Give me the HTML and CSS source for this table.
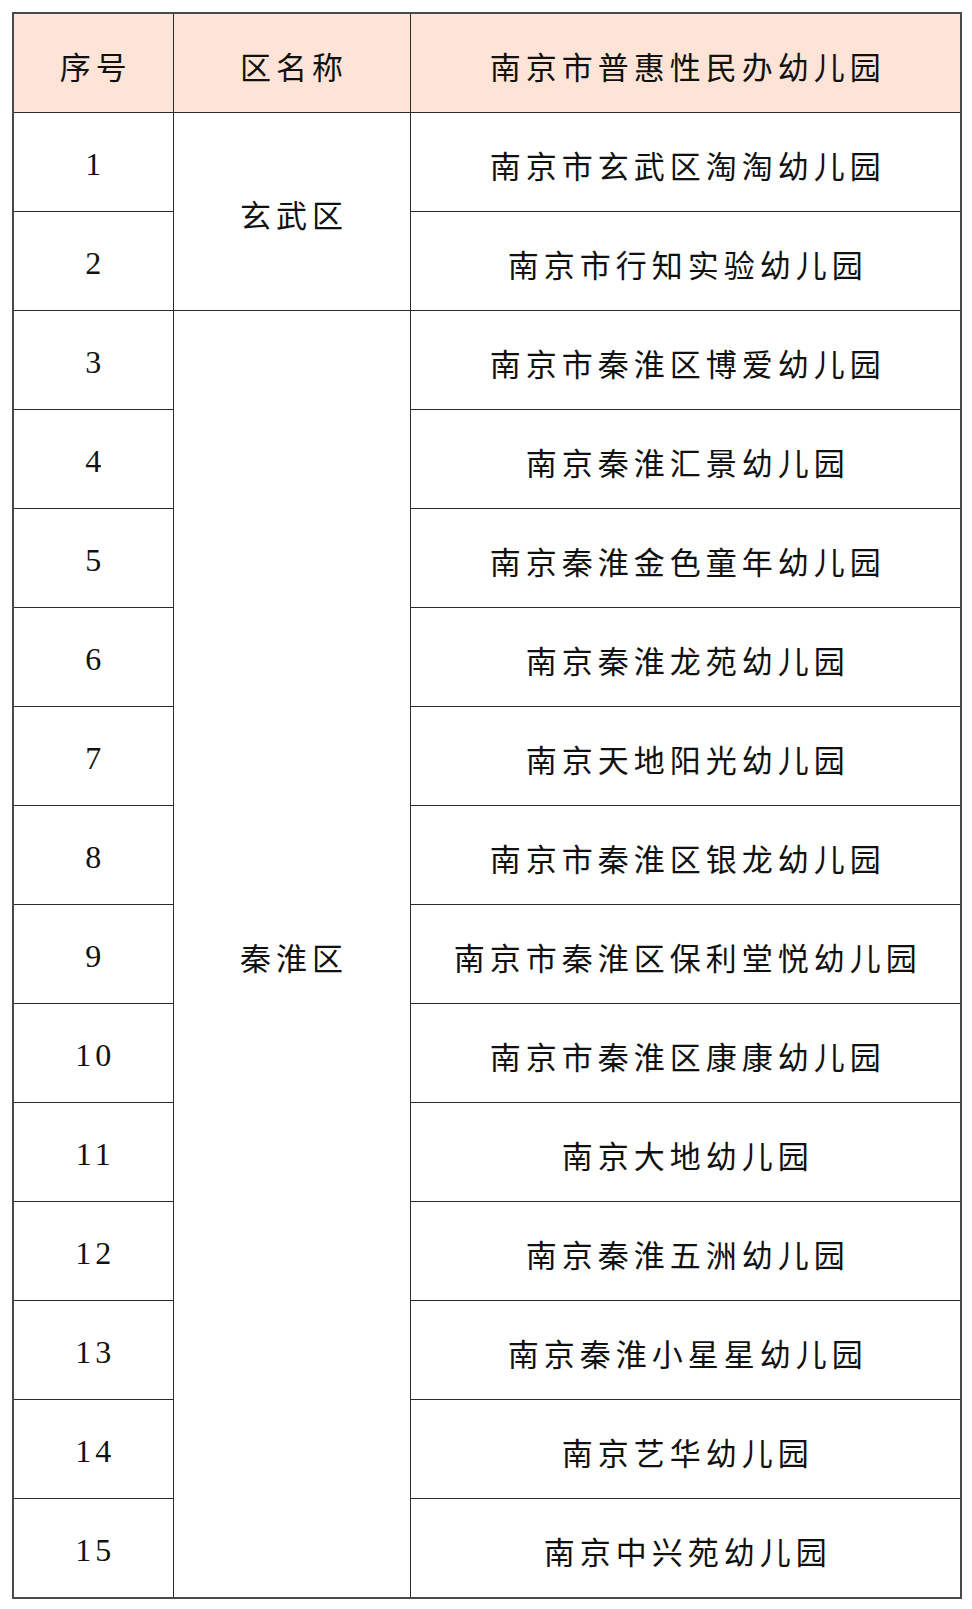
FILE: index.html
```html
<!DOCTYPE html>
<html lang="zh-CN">
<head>
<meta charset="utf-8">
<title>南京市普惠性民办幼儿园</title>
<link rel="stylesheet" href="styles.css">
</head>
<body>
<table class="list">
  <colgroup>
    <col class="c-no">
    <col class="c-district">
    <col class="c-name">
  </colgroup>
  <thead>
    <tr class="head">
      <th>序号</th>
      <th>区名称</th>
      <th>南京市普惠性民办幼儿园</th>
    </tr>
  </thead>
  <tbody>
    <tr><td class="num">1</td><td class="district" rowspan="2">玄武区</td><td>南京市玄武区淘淘幼儿园</td></tr>
    <tr><td class="num">2</td><td>南京市行知实验幼儿园</td></tr>
    <tr><td class="num">3</td><td class="district" rowspan="13">秦淮区</td><td>南京市秦淮区博爱幼儿园</td></tr>
    <tr><td class="num">4</td><td>南京秦淮汇景幼儿园</td></tr>
    <tr><td class="num">5</td><td>南京秦淮金色童年幼儿园</td></tr>
    <tr><td class="num">6</td><td>南京秦淮龙苑幼儿园</td></tr>
    <tr><td class="num">7</td><td>南京天地阳光幼儿园</td></tr>
    <tr><td class="num">8</td><td>南京市秦淮区银龙幼儿园</td></tr>
    <tr><td class="num">9</td><td>南京市秦淮区保利堂悦幼儿园</td></tr>
    <tr><td class="num">10</td><td>南京市秦淮区康康幼儿园</td></tr>
    <tr><td class="num">11</td><td>南京大地幼儿园</td></tr>
    <tr><td class="num">12</td><td>南京秦淮五洲幼儿园</td></tr>
    <tr><td class="num">13</td><td>南京秦淮小星星幼儿园</td></tr>
    <tr><td class="num">14</td><td>南京艺华幼儿园</td></tr>
    <tr><td class="num">15</td><td>南京中兴苑幼儿园</td></tr>
  </tbody>
</table>
</body>
</html>
```
FILE: styles.css
```css
html, body {
  margin: 0;
  padding: 0;
  background: #ffffff;
}

body {
  padding: 12px 0 0 12px;
  font-family: "Noto Sans CJK SC", "Liberation Serif", sans-serif;
  color: #111111;
}

.list {
  border-collapse: collapse;
  width: 948px;
  table-layout: fixed;
  border: 2px solid #4a4a4a;
}

.c-no { width: 160px; }
.c-district { width: 237px; }
.c-name { width: 551px; }

.list th,
.list td {
  height: 94px;
  padding: 4px 0 0 5px;
  border: 1px solid #2b2b2b;
  text-align: center;
  vertical-align: middle;
  font-size: 31px;
  font-weight: 400;
  letter-spacing: 5px;
  line-height: 1;
  white-space: nowrap;
}

.head th {
  background: #fde4d7;
}

.list td.num {
  font-family: "Liberation Serif", serif;
  font-size: 32px;
  letter-spacing: 4px;
  padding-left: 4px;
}
```
